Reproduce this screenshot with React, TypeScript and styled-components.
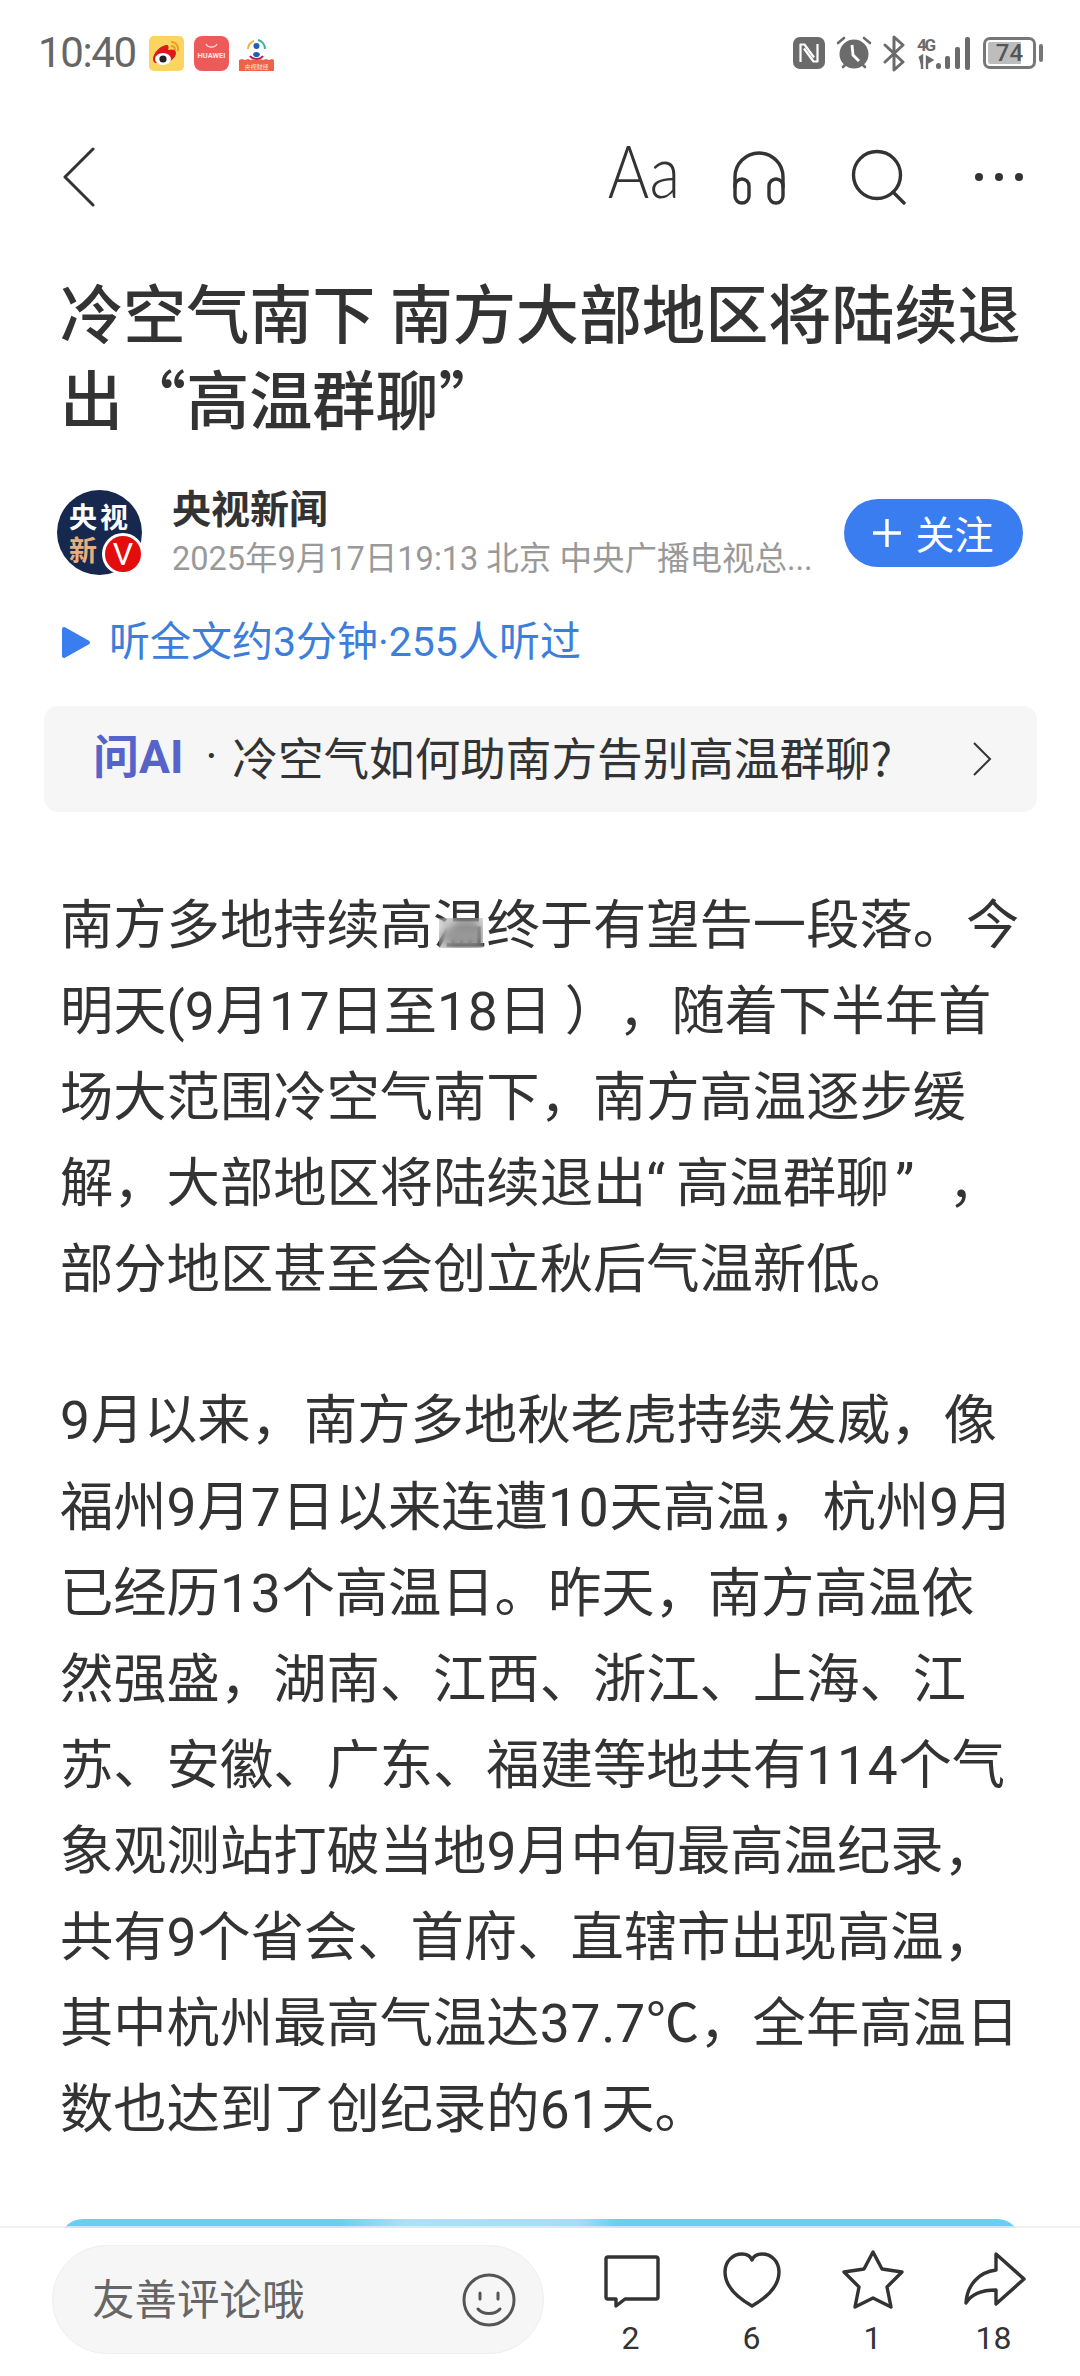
import React from "react";
import styled, { createGlobalStyle } from "styled-components";

const Global = createGlobalStyle`
  html, body { margin: 0; padding: 0; background: #fff; }
  * { box-sizing: border-box; }
`;

const CJK = `"Noto Sans CJK SC", sans-serif`;
const MIXED = `Roboto, "Noto Sans CJK SC", sans-serif`;

const Page = styled.div`
  width: 1080px;
  height: 2376px;
  display: flex;
  flex-direction: column;
  overflow: hidden;
  background: #fff;
  color: #333;
  font-family: ${CJK};
`;

const Scroll = styled.main`
  flex: 1;
  min-height: 0;
  overflow: hidden;
`;

const StatusBar = styled.div`
  height: 106px;
  padding: 0 37px 0 38px;
  display: flex;
  align-items: center;
`;

const Time = styled.span`
  font: 400 42px/1 Roboto, sans-serif;
  color: #666;
  letter-spacing: -1.4px;
  margin-right: 13px;
`;

const NoticeIcon = styled.svg`
  width: 35px;
  height: 35px;
  margin-right: 10px;
  display: block;
`;

const StatusRight = styled.div`
  margin-left: auto;
  display: flex;
  align-items: center;
  gap: 11px;
`;

const StatusIcon = styled.svg`
  display: block;
  flex: none;
`;

const Battery = styled.div`
  width: 53px;
  height: 32px;
  border: 3px solid #777;
  border-radius: 7px;
  margin-left: 2px;
  background: linear-gradient(90deg, #bdbdbd 74%, #fff 74%);
  background-clip: content-box;
  padding: 2px;
  display: flex;
  align-items: center;
  justify-content: center;
  font: 500 24px/1 Roboto, sans-serif;
  color: #555;
`;

const BatteryCap = styled.div`
  width: 4px;
  height: 18px;
  border-radius: 2px;
  background: #777;
  margin-left: -8px;
`;

const NavBar = styled.nav`
  height: 142px;
  padding: 0 57px 0 63px;
  display: flex;
  align-items: center;
`;

const NavRight = styled.div`
  margin-left: auto;
  display: flex;
  align-items: center;
`;

const AaLabel = styled.span`
  display: inline-block;
  font: 300 72px/1 Lato, sans-serif;
  color: #333;
  margin: 0 52px 14px 0;
  transform: scaleX(0.88);
  transform-origin: right center;
`;

const NavIcon = styled.svg<{ $gap?: number }>`
  display: block;
  margin-right: ${(p) => p.$gap ?? 0}px;
`;

const Title = styled.h1`
  margin: 20px 0 0;
  padding: 0 30px 0 60px;
  font: 500 63.1px/86px ${CJK};
  color: #333;
`;

const AuthorRow = styled.div`
  margin-top: 50px;
  height: 85px;
  padding: 0 57px;
  display: flex;
  align-items: center;
`;

const Avatar = styled.div`
  position: relative;
  width: 85px;
  height: 85px;
  flex: none;
  border-radius: 50%;
  background: #17284f;
  padding: 10px 8px 0 12px;
  display: grid;
  grid-template-columns: 31px 31px;
  grid-auto-rows: 33px;
  font: 700 28px/33px ${CJK};
  color: #fff;
`;

const AvatarTan = styled.span`
  color: #e6b07e;
`;

const VBadge = styled.span`
  position: absolute;
  right: -2px;
  bottom: 0;
  width: 42px;
  height: 42px;
  border-radius: 50%;
  border: 3px solid #fff;
  background: #e40d0d;
  color: #fff;
  display: flex;
  align-items: center;
  justify-content: center;
  font: 400 32px/1 Roboto, sans-serif;
`;

const AuthorInfo = styled.div`
  margin-left: 30px;
  width: 640px;
  flex: none;
`;

const AuthorName = styled.div`
  font: 700 39px/44px ${CJK};
  color: #333;
`;

const AuthorMeta = styled.div`
  margin-top: 9px;
  font: 400 32.5px/44px ${MIXED};
  color: #999;
  white-space: nowrap;
`;

const FollowButton = styled.button`
  margin-left: auto;
  flex: none;
  width: 179px;
  height: 68px;
  border: 0;
  padding: 0;
  border-radius: 34px;
  background: #3a7df0;
  color: #fff;
  display: flex;
  align-items: center;
  justify-content: center;
  gap: 14px;
  font: 400 39px/1 ${CJK};
`;

const ListenRow = styled.div`
  margin-top: 42px;
  padding-left: 61px;
  height: 50px;
  display: flex;
  align-items: center;
  gap: 18px;
  font: 400 41px/50px ${MIXED};
  color: #3c7edc;
`;

const AskCard = styled.div`
  margin: 39px 43px 0 44px;
  height: 106px;
  border-radius: 14px;
  background: #f6f6f6;
  padding: 0 45px 5px 49px;
  display: flex;
  align-items: center;
  font: 400 45.6px/1 ${CJK};
  color: #333;
`;

const AskBrand = styled.span`
  font: 700 46px/1 Roboto, "Noto Sans CJK SC", sans-serif;
  color: #5563cb;
`;

const AskDot = styled.span`
  margin: 0 15px 0 22px;
  font-family: Roboto, sans-serif;
`;

const AskChevron = styled.svg`
  margin-left: auto;
  margin-top: 5px;
  display: block;
`;

const Article = styled.article`
  margin-top: 70.5px;
  padding-left: 60px;
  font: 400 53.3px/86.1px ${MIXED};
  color: #333;
  text-spacing-trim: space-all;
`;

const Paragraph = styled.p`
  margin: 0 0 65.5px;
`;

const Line = styled.span`
  display: block;
  height: 86.1px;
  white-space: nowrap;
`;

const Digits = styled.span`
  letter-spacing: 0.8px;
`;

const WideParen = styled.span`
  margin-left: 13px;
`;

const OpenQuote = styled.span`
  margin-right: 11px;
`;

const CloseQuote = styled.span`
  margin-left: 6px;
  margin-right: 34px;
`;

const BlurWrap = styled.span`
  position: relative;
  display: inline-block;
`;

const BlurPatch = styled.span`
  position: absolute;
  left: 6px;
  width: 44px;
  top: 35px;
  height: 30px;
  backdrop-filter: blur(5px);
  background: rgba(120, 120, 120, 0.2);
`;

const Banner = styled.div`
  margin: 0 59px 0 -1px;
  height: 40px;
  border-radius: 24px 24px 0 0;
  background: linear-gradient(90deg, #66cff2 0%, #66cff2 29%, #a8e3f7 36%, #a0e0f6 54%, #66cff2 58%, #66cff2 100%);
`;

const BottomBar = styled.footer`
  position: relative;
  flex: none;
  height: 150px;
  margin-top: -2px;
  background: #fff;
  background-clip: padding-box;
  border-top: 2px solid rgba(238, 238, 238, 0.75);
  padding: 17px 26px 0 52px;
  display: flex;
  align-items: flex-start;
`;

const Comment = styled.div`
  width: 493px;
  height: 109px;
  border-radius: 55px;
  background: #f6f6f6;
  border: 1px solid #efefef;
  padding: 0 27px 0 39px;
  display: flex;
  align-items: center;
  justify-content: space-between;
  font: 400 42.5px/1 ${CJK};
  color: #666;
`;

const CommentText = styled.span`
  margin-bottom: 5px;
`;

const Actions = styled.div`
  margin-left: 26px;
  display: grid;
  grid-template-columns: repeat(4, 121px);
`;

const Action = styled.div`
  padding-top: 5px;
  display: flex;
  flex-direction: column;
  align-items: center;
`;

const ActionIcon = styled.svg`
  display: block;
  width: 64px;
  height: 60px;
`;

const ActionCount = styled.span`
  margin-top: 10px;
  font: 400 32px/36px Roboto, sans-serif;
  color: #333;
`;

const p2 = [
  "9月以来，南方多地秋老虎持续发威，像",
  "福州9月7日以来连遭10天高温，杭州9月",
  "已经历13个高温日。昨天，南方高温依",
  "然强盛，湖南、江西、浙江、上海、江",
  "苏、安徽、广东、福建等地共有114个气",
  "象观测站打破当地9月中旬最高温纪录，",
  "共有9个省会、首府、直辖市出现高温，",
  "其中杭州最高气温达37.7℃，全年高温日",
  "数也达到了创纪录的61天。",
];

const withDigits = (text: string) =>
  text.split(/(\d+)/).map((part, i) => (i % 2 ? <Digits key={i}>{part}</Digits> : part));

const stroke = { fill: "none", stroke: "#333", strokeWidth: 3.4, strokeLinecap: "round", strokeLinejoin: "round" } as const;

export default function App() {
  return (
    <Page>
      <Global />
      <Scroll>
        <StatusBar>
          <Time>10:40</Time>
          <NoticeIcon viewBox="0 0 35 35">
            <rect width="35" height="35" rx="5" fill="#fbd55f" />
            <path d="M4 23c0-6 7-13 13-14 3 0 3 2 2 5 4-1 8-1 8 3 0 5-7 10-13 10S4 28 4 23z" fill="#d9191c" />
            <ellipse cx="14" cy="23" rx="8" ry="6" fill="#fff" />
            <circle cx="14" cy="23" r="3.6" fill="#222" />
            <path d="M22 6c5 0 8 4 7 9M22 10c3 0 4 2 4 4" fill="none" stroke="#f09a1f" strokeWidth="2" />
          </NoticeIcon>
          <NoticeIcon viewBox="0 0 35 35">
            <rect width="35" height="35" rx="8" fill="#ee5a5a" />
            <path d="M12 8c2 4 9 4 11 0" fill="none" stroke="#fbd7d7" strokeWidth="1.3" />
            <text x="17.5" y="22" textAnchor="middle" fontSize="7.5" fontWeight="700" fontFamily="Roboto, sans-serif" fill="#fde3e3">HUAWEI</text>
          </NoticeIcon>
          <NoticeIcon viewBox="0 0 35 35">
            <path d="M9 13a9 9 0 0 1 6-8" fill="none" stroke="#e8b93a" strokeWidth="2" />
            <path d="M19 4a9 9 0 0 1 7 9" fill="none" stroke="#35b59b" strokeWidth="2" />
            <circle cx="17.5" cy="10" r="3" fill="#1f5fb4" />
            <path d="M14 19c0-4 7-4 7 0l-2 2h-3z" fill="#1f5fb4" />
            <path d="M11 20c3 4 10 4 13 0" fill="none" stroke="#c2185b" strokeWidth="2" />
            <path d="M0 35V24l3-1 3 1 3-1 3 1 3-1 3 1 3-1 3 1 3-1 3 1 3-1 2 1v11z" fill="#f0614c" />
            <text x="17.5" y="32.5" textAnchor="middle" fontSize="6" fill="#fde9c4" fontFamily="Noto Sans CJK SC, sans-serif">央视财经</text>
          </NoticeIcon>
          <StatusRight>
            <StatusIcon width="32" height="32" viewBox="0 0 32 32">
              <rect width="32" height="32" rx="7" fill="#6b6b6b" />
              <path d="M7.5 25V7.5h4l9.5 13M24.5 7v17.5h-4L11 11.5" fill="none" stroke="#fff" strokeWidth="2.2" strokeLinejoin="round" />
            </StatusIcon>
            <StatusIcon width="36" height="34" viewBox="0 0 36 34">
              <circle cx="18" cy="18" r="14.5" fill="#6b6b6b" />
              <path d="M2 7l6-5M34 7l-6-5M7 31l3-3M29 31l-3-3" stroke="#6b6b6b" strokeWidth="2.6" strokeLinecap="round" />
              <path d="M16 9l1 10 6 6" fill="none" stroke="#fff" strokeWidth="2.8" />
            </StatusIcon>
            <StatusIcon width="23" height="37" viewBox="0 0 23 37">
              <path d="M2 10l18 17-9 8V2l9 8L2 27" fill="none" stroke="#6b6b6b" strokeWidth="3" strokeLinejoin="round" strokeLinecap="round" />
            </StatusIcon>
            <StatusIcon width="53" height="34" viewBox="0 0 53 34">
              <text x="0" y="15" fontSize="17" fontWeight="700" fontFamily="Roboto, sans-serif" fill="#6b6b6b" textLength="19">4G</text>
              <path d="M2 22l3-2v13M10 20v13M10 27l5-3-5-3z" fill="#6b6b6b" stroke="#6b6b6b" strokeWidth="2.4" />
              <g fill="#6b6b6b">
                <rect x="19" y="27" width="5" height="6" rx="2.5" />
                <rect x="28" y="20" width="5" height="13" rx="2" />
                <rect x="38" y="11" width="5" height="22" rx="2" />
                <rect x="48" y="1" width="5" height="33" rx="2" />
              </g>
            </StatusIcon>
            <Battery>74</Battery>
            <BatteryCap />
          </StatusRight>
        </StatusBar>

        <NavBar>
          <svg width="32" height="60" viewBox="0 0 32 60" {...stroke}>
            <path d="M30 2L2 30l28 28" strokeWidth={3} />
          </svg>
          <NavRight>
            <AaLabel>Aa</AaLabel>
            <NavIcon $gap={65} width="54" height="56" viewBox="0 0 54 56" {...stroke}>
              <path d="M3 38V28a24 24 0 0 1 48 0v10" />
              <rect x="3" y="30" width="14" height="24" rx="7" />
              <rect x="37" y="30" width="14" height="24" rx="7" />
            </NavIcon>
            <NavIcon $gap={68} width="56" height="56" viewBox="0 0 56 56" {...stroke}>
              <circle cx="26" cy="26" r="23.5" />
              <path d="M42 43l11 11" />
            </NavIcon>
            <NavIcon width="48" height="10" viewBox="0 0 48 10">
              <circle cx="4" cy="5" r="4" fill="#333" />
              <circle cx="24" cy="5" r="4" fill="#333" />
              <circle cx="44" cy="5" r="4" fill="#333" />
            </NavIcon>
          </NavRight>
        </NavBar>

        <Title>
          冷空气南下 南方大部地区将陆续退
          <br />
          出“高温群聊”
        </Title>

        <AuthorRow>
          <Avatar>
            <span>央</span>
            <span>视</span>
            <AvatarTan>新</AvatarTan>
            <VBadge>V</VBadge>
          </Avatar>
          <AuthorInfo>
            <AuthorName>央视新闻</AuthorName>
            <AuthorMeta>2025年9月17日19:13 北京 中央广播电视总...</AuthorMeta>
          </AuthorInfo>
          <FollowButton>
            <svg width="28" height="28" viewBox="0 0 28 28" fill="none" stroke="#fff" strokeWidth="3.4">
              <path d="M0 14h28M14 0v28" />
            </svg>
            <span>关注</span>
          </FollowButton>
        </AuthorRow>

        <ListenRow>
          <svg width="30" height="33" viewBox="0 0 30 33">
            <path d="M3 3l24 13.5L3 30z" fill="#3a7df0" stroke="#3a7df0" strokeWidth="4" strokeLinejoin="round" />
          </svg>
          <span>听全文约3分钟·255人听过</span>
        </ListenRow>

        <AskCard>
          <AskBrand>问AI</AskBrand>
          <AskDot>·</AskDot>
          <span>冷空气如何助南方告别高温群聊?</span>
          <AskChevron width="20" height="34" viewBox="0 0 20 34" fill="none" stroke="#333" strokeWidth="2">
            <path d="M2 1l16 16L2 33" />
          </AskChevron>
        </AskCard>

        <Article>
          <Paragraph>
            <Line>
              南方多地持续高
              <BlurWrap>
                温<BlurPatch />
              </BlurWrap>
              终于有望告一段落。今
            </Line>
            <Line>
              明天({withDigits("9月17日至18日")}<WideParen>）</WideParen>，随着下半年首
            </Line>
            <Line>场大范围冷空气南下，南方高温逐步缓</Line>
            <Line>
              解，大部地区将陆续退出<OpenQuote>“</OpenQuote>高温群聊<CloseQuote>”</CloseQuote>，
            </Line>
            <Line>部分地区甚至会创立秋后气温新低。</Line>
          </Paragraph>
          <Paragraph>
            {p2.map((l) => (
              <Line key={l}>{withDigits(l)}</Line>
            ))}
          </Paragraph>
          <Banner />
        </Article>
      </Scroll>

      <BottomBar>
        <Comment>
          <CommentText>友善评论哦</CommentText>
          <svg width="54" height="54" viewBox="0 0 54 54" fill="none" stroke="#555" strokeWidth="3" strokeLinecap="round">
            <circle cx="27" cy="27" r="25" />
            <path d="M18 20v6M36 20v6M16 36c5 6 17 6 22 0" />
          </svg>
        </Comment>
        <Actions>
          <Action>
            <ActionIcon viewBox="0 0 64 60" {...stroke}>
              <path d="M9 7h48a2 2 0 0 1 2 2v38a2 2 0 0 1-2 2H26l-9 7v-7H9a2 2 0 0 1-2-2V9a2 2 0 0 1 2-2z" />
            </ActionIcon>
            <ActionCount>2</ActionCount>
          </Action>
          <Action>
            <ActionIcon viewBox="0 0 64 60" {...stroke}>
              <path d="M32 56C18 48 5 37 5 22 5 11 13 4 22 4c4 0 8 1 10 6 2-5 6-6 10-6 9 0 17 7 17 18 0 15-13 26-27 34z" />
            </ActionIcon>
            <ActionCount>6</ActionCount>
          </Action>
          <Action>
            <ActionIcon viewBox="0 0 64 60" {...stroke}>
              <path d="M32 2l9 17 20 3-15 15 4 20-18-9-18 9 4-20L3 22l20-3z" />
            </ActionIcon>
            <ActionCount>1</ActionCount>
          </Action>
          <Action>
            <ActionIcon viewBox="0 0 64 60" {...stroke}>
              <path d="M34 4l28 25-28 25V40c-12 0-24 3-30 13 1-18 13-31 30-33z" />
            </ActionIcon>
            <ActionCount>18</ActionCount>
          </Action>
        </Actions>
      </BottomBar>
    </Page>
  );
}
